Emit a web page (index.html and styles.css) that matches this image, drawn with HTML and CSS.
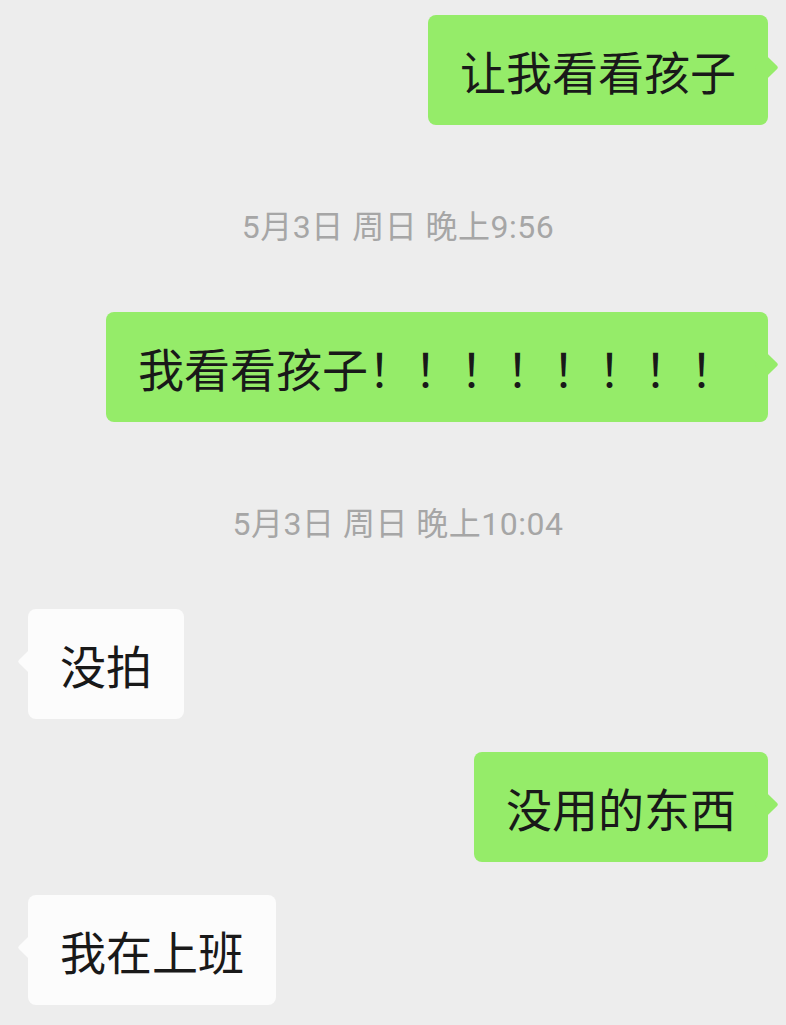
FILE: index.html
```html
<!DOCTYPE html>
<html>
<head>
    <meta charset="utf-8">
    <title>聊天</title>
    <link rel="stylesheet" href="styles.css">
</head>
<body>
    <div class="chat">
        <div class="row mine">
            <div class="bubble">让我看看孩子</div>
        </div>

        <div class="time">5月3日 周日 晚上9:56</div>

        <div class="row mine">
            <div class="bubble">我看看孩子！！！！！！！！</div>
        </div>

        <div class="time">5月3日 周日 晚上10:04</div>

        <div class="row theirs">
            <div class="bubble">没拍</div>
        </div>

        <div class="row mine">
            <div class="bubble">没用的东西</div>
        </div>

        <div class="row theirs">
            <div class="bubble">我在上班</div>
        </div>
    </div>
</body>
</html>
```

FILE: styles.css
```css
body {
    margin: 0;
    background-color: #ededed;
    font-family: "Noto Sans CJK SC", "Noto Sans", sans-serif;
}
.chat {
    display: flex;
    flex-direction: column;
    padding: 15px 18px 0 28px;
}
.row {
    display: flex;
    margin-bottom: 33px;
}
.row.mine {
    justify-content: flex-end;
}
.row.theirs {
    justify-content: flex-start;
}
.bubble {
    position: relative;
    padding: 27px 32px;
    font-size: 46px;
    line-height: 56px;
    color: #191919;
    border-radius: 8px;
    white-space: nowrap;
}
.bubble::after {
    content: "";
    position: absolute;
    top: 44px;
    width: 17px;
    height: 17px;
    border-radius: 2px;
    transform: rotate(45deg);
}
.mine .bubble,
.mine .bubble::after {
    background-color: #95ec69;
}
.mine .bubble::after {
    right: -7px;
}
.theirs .bubble,
.theirs .bubble::after {
    background-color: #fcfcfc;
}
.theirs .bubble::after {
    left: -7px;
}
.time {
    margin: 49px 0 65px;
    text-align: center;
    font-family: Roboto, "Noto Sans CJK SC", sans-serif;
    font-size: 32px;
    line-height: 40px;
    letter-spacing: 0.5px;
    color: #a6a6a6;
}
```
